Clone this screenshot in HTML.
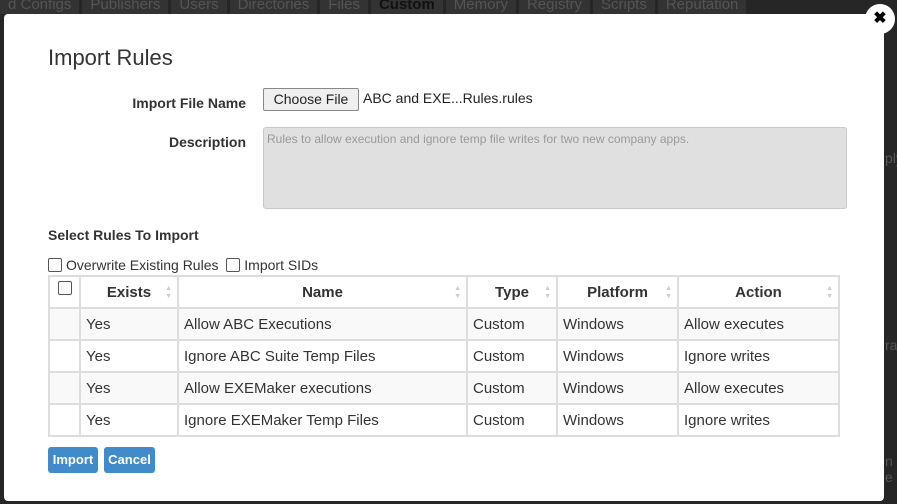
<!DOCTYPE html>
<html><head><style>
body{margin:0;width:897px;height:504px;background:#262626;position:relative;overflow:hidden;font-family:"Liberation Sans",Arial,sans-serif;}
.tabs{position:absolute;top:-4px;left:0;height:18px;font-size:15px;color:#555;white-space:nowrap;}
.tabs span{display:inline-block;background:#333;padding:0 8px;margin-right:3px;line-height:18px}
.modal{position:absolute;left:4px;top:14px;width:880px;height:487px;background:#fff;border-radius:4px;}
.close{position:absolute;left:861px;top:-10px;width:30px;height:30px;border-radius:50%;background:#fff;text-align:center;line-height:30px;font-weight:bold;font-size:16px;color:#000}
h1{position:absolute;left:44px;top:31px;margin:0;font-weight:normal;font-size:22px;color:#333}
.lbl{position:absolute;font-weight:bold;font-size:14px;color:#333;text-align:right;width:200px}
.btnf{position:absolute;left:259px;top:74px;width:94px;height:21px;border:1px solid #888;background:#efefef;border-radius:2px;font-size:14px;text-align:center;line-height:21px;color:#222}
.fn{position:absolute;left:359px;top:76px;font-size:14px;color:#222}
.desc{position:absolute;left:259px;top:113px;width:584px;height:82px;background:#e0e0e0;border:1px solid #c8c8c8;border-radius:3px;font-size:12px;color:#999;padding:4px 3px;box-sizing:border-box}
.sel{position:absolute;left:44px;top:213px;font-weight:bold;font-size:14px;color:#333}
.cb{display:inline-block;width:12px;height:12px;border:1px solid #555;border-radius:2px;vertical-align:-2px;margin-right:4px;background:#fff}
.opts{position:absolute;left:44px;top:243px;font-size:14px;color:#333}
table{position:absolute;left:44px;top:261px;border-collapse:collapse;table-layout:fixed;font-size:15px;color:#333;width:792px}
td,th{border:2px solid #ddd;height:30px;padding:0 5px;text-align:left;box-sizing:border-box}
th{position:relative;text-align:center;font-weight:bold}
th .s{position:absolute;right:5px;top:8px;font-size:7px;line-height:8px;color:#ccc}
tr.o td{background:#f9f9f9}
.b{position:absolute;top:433px;height:26px;background:#428bca;color:#fff;font-size:13px;font-weight:bold;line-height:26px;text-align:center;border-radius:3px}
.side{position:absolute;left:885px;color:#555;font-size:14px}
</style></head><body>
<div class="tabs"><span>d Configs</span><span>Publishers</span><span>Users</span><span>Directories</span><span>Files</span><span style="color:#111;font-weight:bold">Custom</span><span>Memory</span><span>Registry</span><span>Scripts</span><span>Reputation</span></div>
<div class="side" style="top:150px">ply</div><div class="side" style="top:337px">ra</div><div class="side" style="top:453px">n e</div>
<div class="modal">
<h1>Import Rules</h1>
<div class="lbl" style="left:42px;top:81px">Import File Name</div>
<div class="btnf">Choose File</div><div class="fn">ABC and EXE...Rules.rules</div>
<div class="lbl" style="left:42px;top:120px">Description</div>
<div class="desc">Rules to allow execution and ignore temp file writes for two new company apps.</div>
<div class="sel">Select Rules To Import</div>
<div class="opts"><span class="cb"></span>Overwrite Existing Rules &nbsp;<span class="cb"></span>Import SIDs</div>
<table>
<colgroup><col style="width:31px"><col style="width:98px"><col style="width:289px"><col style="width:90px"><col style="width:121px"><col></colgroup>
<tr style="height:32px"><th style="vertical-align:top;padding:3px 0 0 0"><span class="cb" style="margin:0"></span></th><th>Exists<span class="s">▲<br>▼</span></th><th>Name<span class="s">▲<br>▼</span></th><th>Type<span class="s">▲<br>▼</span></th><th>Platform<span class="s">▲<br>▼</span></th><th>Action<span class="s">▲<br>▼</span></th></tr>
<tr class="o" style="height:32px"><td></td><td>Yes</td><td>Allow ABC Executions</td><td>Custom</td><td>Windows</td><td>Allow executes</td></tr>
<tr style="height:32px"><td></td><td>Yes</td><td>Ignore ABC Suite Temp Files</td><td>Custom</td><td>Windows</td><td>Ignore writes</td></tr>
<tr class="o" style="height:32px"><td></td><td>Yes</td><td>Allow EXEMaker executions</td><td>Custom</td><td>Windows</td><td>Allow executes</td></tr>
<tr style="height:32px"><td></td><td>Yes</td><td>Ignore EXEMaker Temp Files</td><td>Custom</td><td>Windows</td><td>Ignore writes</td></tr>
</table>
<div class="b" style="left:44px;width:50px">Import</div>
<div class="b" style="left:100px;width:51px">Cancel</div>
<div class="close">✖</div>
</div>
</body></html>
